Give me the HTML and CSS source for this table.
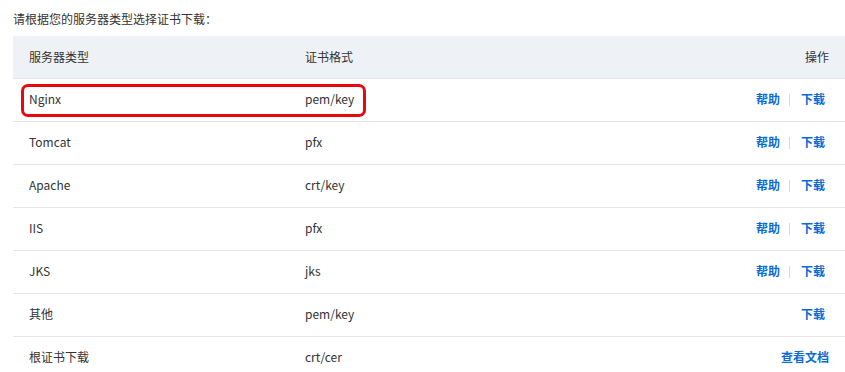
FILE: index.html
```html
<!DOCTYPE html>
<html lang="zh">
<head>
<meta charset="utf-8">
<link rel="stylesheet" href="styles.css">
</head>
<body>
<p class="intro">请根据您的服务器类型选择证书下载：</p>
<table class="cert-table">
  <colgroup><col class="col1"><col class="col2"><col class="col3"></colgroup>
  <thead>
    <tr><th>服务器类型</th><th>证书格式</th><th class="c3">操作</th></tr>
  </thead>
  <tbody>
    <tr class="hl"><td class="c1"><span class="mark"></span>Nginx</td><td>pem/key</td><td class="c3"><a>帮助</a><i class="sep"></i><a class="dl">下载</a></td></tr>
    <tr><td>Tomcat</td><td>pfx</td><td class="c3"><a>帮助</a><i class="sep"></i><a class="dl">下载</a></td></tr>
    <tr><td>Apache</td><td>crt/key</td><td class="c3"><a>帮助</a><i class="sep"></i><a class="dl">下载</a></td></tr>
    <tr><td>IIS</td><td>pfx</td><td class="c3"><a>帮助</a><i class="sep"></i><a class="dl">下载</a></td></tr>
    <tr><td>JKS</td><td>jks</td><td class="c3"><a>帮助</a><i class="sep"></i><a class="dl">下载</a></td></tr>
    <tr><td>其他</td><td>pem/key</td><td class="c3"><a class="dl">下载</a></td></tr>
    <tr><td>根证书下载</td><td>crt/cer</td><td class="c3"><a>查看文档</a></td></tr>
  </tbody>
</table>
</body>
</html>
```
FILE: styles.css
```css
html, body { margin: 0; padding: 0; background: #fff; }
body {
  font-family: "PingFang SC", "Noto Sans CJK SC", "Noto Sans", sans-serif;
  font-size: 12px;
  color: #333;
}
.intro {
  margin: 0;
  padding: 10px 0 0 13px;
  height: 26px;
  line-height: 18px;
  color: #333;
}
.cert-table {
  margin-left: 13px;
  width: 832px;
  border-collapse: collapse;
  table-layout: fixed;
}
.col1 { width: 276px; }
.col2 { width: 250px; }
.cert-table th {
  box-sizing: border-box;
  background: #eef2f6;
  height: 42px;
  padding: 0 16px 1px;
  text-align: left;
  font-weight: normal;
  color: #333;
}
.cert-table td {
  box-sizing: border-box;
  height: 43px;
  padding: 0 16px 2px;
  border-top: 1px solid #e5e5e5;
  color: #333;
}
.cert-table .c3 { text-align: right; padding-right: 16px; }
.c3 a {
  color: #0a6bd6;
  font-weight: bold;
  cursor: pointer;
}
.c3 a.dl { margin-right: 4px; }
.sep {
  display: inline-block;
  width: 1px;
  height: 12px;
  background: #d9d9d9;
  margin: 0 11px 0 9px;
  vertical-align: -2px;
}
.hl .c1 { position: relative; }
.mark {
  position: absolute;
  left: 8px;
  top: 5px;
  width: 339px;
  height: 27px;
  border: 3px solid #e8080f;
  border-radius: 7px;
}
```
